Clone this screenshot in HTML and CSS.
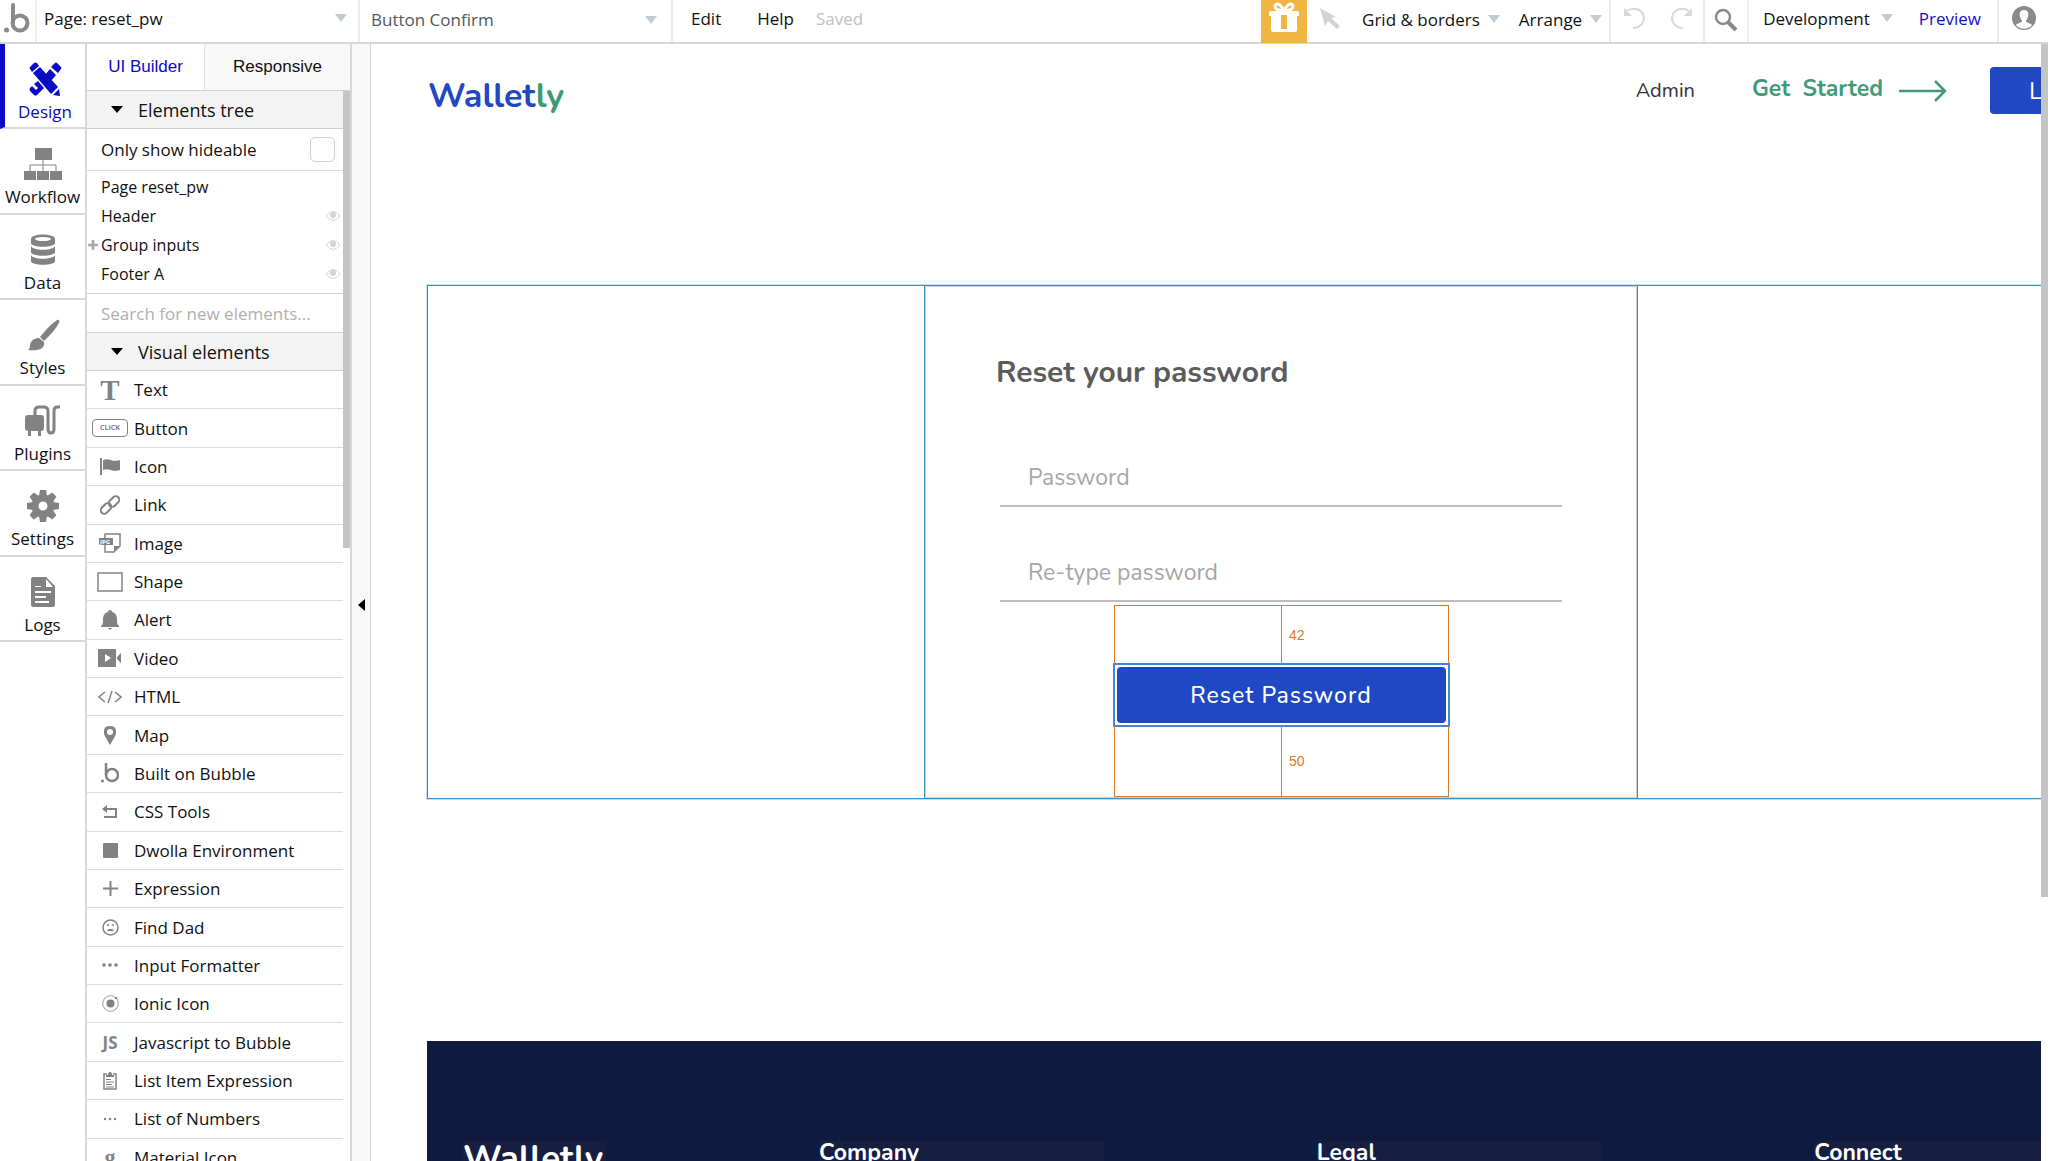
FILE: index.html
```
<!DOCTYPE html>
<html lang="en">
<head>
  <meta charset="UTF-8" />
  <title>reset_pw | Editor</title>
  <meta name="viewport" content="width=device-width, initial-scale=1.0" />
  <link rel="stylesheet" href="styles.css">
</head>
<body>
  <header class="topbar">
    <a class="logo" href="#" aria-label="Home">
      <svg width="28" height="30" viewBox="0 0 28 30"><path d="M9 2v17" fill="none" stroke="#8a8a8a" stroke-width="4" stroke-linecap="round"/><circle cx="16" cy="20" r="7.5" fill="none" stroke="#8a8a8a" stroke-width="4"/><circle cx="2.500" cy="27" r="2.500" fill="#8a8a8a"/></svg>
    </a>
    <label class="picker picker-page">
      <select aria-label="Page"><option>Page: reset_pw</option></select>
      <span class="caret"></span>
    </label>
    <label class="picker picker-element">
      <select aria-label="Element"><option>Button Confirm</option></select>
      <span class="caret"></span>
    </label>
    <nav class="menu">
      <button>Edit</button>
      <button>Help</button>
      <span class="saved">Saved</span>
    </nav>
    <div class="tools">
      <button class="gift" aria-label="Gift">
        <svg width="32" height="30" viewBox="0 0 32 30"><g fill="none" stroke="#fff" stroke-width="3"><path d="M16 9C11 9 7 7 7 4.500S10 1 12 3s4 6 4 6z"/><path d="M16 9c5 0 9-2 9-4.500S22 1 20 3s-4 6-4 6z"/></g><path d="M3 9h10v5H1v-3q0-2 2-2zM19 9h10q2 0 2 2v3H19zM3 14h10v13h6V14h10v14q0 2-2 2H5q-2 0-2-2zM13 9h6v4h-6z" fill="#fff"/></svg>
      </button>
      <button class="pointer" aria-label="Select">
        <svg width="22" height="22" viewBox="0 0 22 22"><path d="M1 1l16 9-5 1 9 8-3 3-9-8-3 5z" fill="#d2d2d2"/></svg>
      </button>
      <button class="drop">Grid &amp; borders <span class="caret"></span></button>
      <button class="drop drop-arrange">Arrange <span class="caret"></span></button>
      <div class="history">
        <button aria-label="Undo"><svg width="24" height="24" viewBox="0 0 24 24"><path d="M4 5c5-4 16-3 17 7 0 6-5 10-11 10" fill="none" stroke="#d8d8d8" stroke-width="2"/><path d="M1 2v8h8z" fill="#d8d8d8"/></svg></button>
        <button aria-label="Redo"><svg width="24" height="24" viewBox="0 0 24 24"><path d="M20 5c-5-4-16-3-17 7 0 6 5 10 11 10" fill="none" stroke="#d8d8d8" stroke-width="2"/><path d="M23 2v8h-8z" fill="#d8d8d8"/></svg></button>
      </div>
      <button class="search" aria-label="Search">
        <svg width="24" height="24" viewBox="0 0 24 24"><circle cx="9" cy="9" r="7" fill="none" stroke="#8a8a8a" stroke-width="2.500"/><path d="M14 14l8 8" stroke="#8a8a8a" stroke-width="4"/></svg>
      </button>
      <button class="drop drop-version">Development <span class="caret"></span></button>
      <a class="preview" href="#">Preview</a>
      <button class="account" aria-label="Account">
        <svg width="26" height="26" viewBox="0 0 26 26"><circle cx="13" cy="13" r="12" fill="#8a8a8a"/><path d="M13 5c4 0 5 3 4 7-.5 2-2 3-2 4 0 2 5 2 6 4-4 5-12 5-16 0 1-2 6-2 6-4 0-1-1.500-2-2-4-1-4 0-7 4-7z" fill="#fff"/></svg>
      </button>
    </div>
  </header>

  <div class="workspace">
    <nav class="rail">
      <a class="active" href="#">
        <svg width="34" height="34" viewBox="0 0 34 34"><g fill="currentColor"><path d="M2 5l4-4q2-1 3 0l2 3-7 6-2-3q-1-1 0-2zM5 11l7-6 18 20-7 7zM31 27l1 7-7-1zM23 5l4-4q1-1 2 0l4 4q1 1 0 2l-3 4-7-6zM22 7l6 6-5 6-6-6zM10 19l6 7-7 7q-1 1-3 0l-4-4q-1-2 0-3l2-2 4 4 2-2-4-4z"/></g></svg>
        <span>Design</span>
      </a>
      <a href="#">
        <svg width="38" height="34" viewBox="0 0 38 34"><g fill="#828282"><path d="M11 1h17v12H11zM0 24h12v9H0zM13 24h12v9H13zM26 24h12v9H26z"/><path d="M19 13v11M6 24v-6h26v6" fill="none" stroke="#828282" stroke-width="1"/></g></svg>
        <span>Workflow</span>
      </a>
      <a href="#">
        <svg width="26" height="34" viewBox="0 0 26 34"><g fill="#828282"><path d="M1 6c0-6 24-6 24 0v4c0 5-24 5-24 0zM1 13c2 5 22 5 24 0v6c0 5-24 5-24 0zM1 22c2 5 22 5 24 0v6c0 5-24 5-24 0z"/></g><ellipse cx="13" cy="6" rx="8" ry="2" fill="#fff"/></svg>
        <span>Data</span>
      </a>
      <a href="#">
        <svg width="34" height="34" viewBox="0 0 34 34"><path d="M31 2c2-1 3 1 2 3-4 7-9 12-15 18l-4-4C19 13 25 6 31 2zM13 20l5 4c1 7-5 9-16 8 3-2 1-4 3-8 2-3 5-4 8-4z" fill="#828282"/></svg>
        <span>Styles</span>
      </a>
      <a href="#">
        <svg width="38" height="34" viewBox="0 0 38 34"><path d="M11 11V7q0-4 4-4h5q4 0 4 4v18q0 4 3 4t3-4V7q0-4 3-4h3" fill="none" stroke="#828282" stroke-width="3"/><path d="M4 11h13q3 0 3 3v10q0 3-3 3v5h-3v-5H7v5H4v-5q-3 0-3-3V14q0-3 3-3z" fill="#828282"/></svg>
        <span>Plugins</span>
      </a>
      <a href="#">
        <svg width="32" height="34" viewBox="-16 -17 32 34"><g fill="#828282"><g id="teeth"><path d="M-4-10l1-6h6l1 6zM-4 10l1 6h6l1-6z"/><path d="M-10-4l-6 1v6l6 1zM10-4l6 1v6l-6 1z"/></g><use href="#teeth" transform="rotate(45)"/></g><circle r="8" fill="none" stroke="#828282" stroke-width="7"/></svg>
        <span>Settings</span>
      </a>
      <a href="#">
        <svg width="24" height="34" viewBox="0 0 24 34"><path d="M2 2h13l9 9v19q0 2-2 2H2q-2 0-2-2V4q0-2 2-2z" fill="#828282"/><path d="M15 4v8h7zM4 11h6v1H4zM4 16h16v2H4zM4 21h11v2H4zM4 26h14v2H4z" fill="#fff"/></svg>
        <span>Logs</span>
      </a>
    </nav>

    <aside class="panel">
      <div class="tabs">
        <button class="tab selected">UI Builder</button>
        <button class="tab">Responsive</button>
      </div>
      <div class="panel-scroll">
        <div class="panel-body">
          <h2 class="group-title"><span class="triangle"></span>Elements tree</h2>
          <label class="hideable">Only show hideable <input type="checkbox"></label>
          <ul class="tree">
            <li>Page reset_pw</li>
            <li>Header <svg class="eye" width="16" height="12" viewBox="0 0 16 12"><path d="M1 6q7-9 14 0-7 9-14 0z" fill="none" stroke="#d4d4d4"/><circle cx="8" cy="5" r="3" fill="#d4d4d4"/></svg></li>
            <li><svg class="plus" width="10" height="10" viewBox="0 0 10 10"><path d="M5 0v10M0 5h10" stroke="#a8a8a8" stroke-width="2.500"/></svg>Group inputs <svg class="eye" width="16" height="12" viewBox="0 0 16 12"><path d="M1 6q7-9 14 0-7 9-14 0z" fill="none" stroke="#d4d4d4"/><circle cx="8" cy="5" r="3" fill="#d4d4d4"/></svg></li>
            <li>Footer A <svg class="eye" width="16" height="12" viewBox="0 0 16 12"><path d="M1 6q7-9 14 0-7 9-14 0z" fill="none" stroke="#d4d4d4"/><circle cx="8" cy="5" r="3" fill="#d4d4d4"/></svg></li>
          </ul>
          <input class="element-search" type="text" placeholder="Search for new elements..." aria-label="Search for new elements">
          <h2 class="group-title"><span class="triangle"></span>Visual elements</h2>
          <ul class="elements">
            <li><span class="icon icon-t">T</span>Text</li>
            <li><span class="icon"><span class="icon-click">CLICK</span></span>Button</li>
            <li><span class="icon"><svg width="20" height="18" viewBox="0 0 20 18"><path d="M1 1v17" stroke="#828282" stroke-width="2"/><path d="M3 3c6-3 9 3 17 0v10c-8 3-11-3-17 0z" fill="#828282"/></svg></span>Icon</li>
            <li><span class="icon"><svg width="20" height="20" viewBox="0 0 20 20"><g fill="none" stroke="#828282" stroke-width="2"><rect x="8" y="3" width="12" height="7" rx="3.500" transform="rotate(-45 14 6.500)"/><rect x="0" y="10" width="12" height="7" rx="3.500" transform="rotate(-45 6 13.500)"/></g></svg></span>Link</li>
            <li><span class="icon"><svg width="22" height="20" viewBox="0 0 22 20"><path d="M6 5V1h15v12l-6 6H6v-7" fill="none" stroke="#828282" stroke-width="1.500"/><path d="M0 5h14v7H0zM15 19v-6h6z" fill="#828282"/><text x="1" y="11" class="jpg">JPG</text></svg></span>Image</li>
            <li><span class="icon"><svg width="26" height="20" viewBox="0 0 26 20"><path d="M1 1h24v18H1z" fill="none" stroke="#828282" stroke-width="1.500"/></svg></span>Shape</li>
            <li><span class="icon"><svg width="18" height="20" viewBox="0 0 18 20"><path d="M9 0q2 0 2 2c4 1 5 4 5 8 0 3 0 4 2 6v1H0v-1c2-2 2-3 2-6 0-4 1-7 5-8q0-2 2-2zM7 18h4q-2 3-4 0z" fill="#828282"/></svg></span>Alert</li>
            <li><span class="icon"><svg width="24" height="18" viewBox="0 0 24 18"><path d="M1 0h16q1 0 1 1v16q0 1-1 1H1q-1 0-1-1V1q0-1 1-1zM19 8l4-4v10l-4-4z" fill="#828282"/><path d="M7 5l6 4-6 4z" fill="#fff"/></svg></span>Video</li>
            <li><span class="icon"><svg width="24" height="14" viewBox="0 0 24 14"><path d="M7 2L1 7l6 5M17 2l6 5-6 5M14 1l-4 12" fill="none" stroke="#828282" stroke-width="1.500"/></svg></span>HTML</li>
            <li><span class="icon"><svg width="12" height="19" viewBox="0 0 12 19"><path d="M6 0c8 0 7 8 4 12l-4 7-4-7C-1 8-2 0 6 0zm0 3a3 3 0 1 0 0 6 3 3 0 0 0 0-6z" fill="#828282"/></svg></span>Map</li>
            <li><span class="icon"><svg width="18" height="20" viewBox="0 0 18 20"><path d="M5 0v12" stroke="#828282" stroke-width="2.500"/><circle cx="11" cy="12" r="6" fill="none" stroke="#828282" stroke-width="2.500"/><circle cx="1.500" cy="18" r="1.500" fill="#828282"/></svg></span>Built on Bubble</li>
            <li><span class="icon"><svg width="16" height="14" viewBox="0 0 16 14"><path d="M4 4h10v8H2" fill="none" stroke="#828282" stroke-width="2"/><path d="M0 4l5-4v8z" fill="#828282"/></svg></span>CSS Tools</li>
            <li><span class="icon"><svg width="15" height="15" viewBox="0 0 15 15"><rect width="15" height="15" rx="1" fill="#828282"/></svg></span>Dwolla Environment</li>
            <li><span class="icon"><svg width="15" height="15" viewBox="0 0 15 15"><path d="M7.500 0v15M0 7.500h15" stroke="#828282" stroke-width="2"/></svg></span>Expression</li>
            <li><span class="icon"><svg width="17" height="17" viewBox="0 0 17 17"><circle cx="8.500" cy="8.500" r="7.500" fill="none" stroke="#828282" stroke-width="1.500"/><circle cx="6" cy="6" r="1" fill="#828282"/><circle cx="11" cy="6" r="1" fill="#828282"/><path d="M5 12c1-3 6-3 7 0z" fill="#828282"/></svg></span>Find Dad</li>
            <li><span class="icon"><svg width="16" height="4" viewBox="0 0 16 4"><g fill="#828282"><circle cx="2" cy="2" r="1.800"/><circle cx="8" cy="2" r="1.800"/><circle cx="14" cy="2" r="1.800"/></g></svg></span>Input Formatter</li>
            <li><span class="icon"><svg width="17" height="17" viewBox="0 0 17 17"><circle cx="8.500" cy="8.500" r="7.800" fill="none" stroke="#9a9a9a"/><circle cx="8.500" cy="8.500" r="4" fill="#828282"/><circle cx="14" cy="3" r="1.200" fill="#828282"/></svg></span>Ionic Icon</li>
            <li><span class="icon icon-js">JS</span>Javascript to Bubble</li>
            <li><span class="icon"><svg width="14" height="18" viewBox="0 0 14 18"><path d="M4 2H1v15h12V2h-3" fill="none" stroke="#828282" stroke-width="1.500"/><path d="M3 5V3h2q0-3 2-3t2 3h2v2z" fill="#828282"/><path d="M3 7.500h5M3 10h8M3 12.500h6M3 15h8" stroke="#828282"/></svg></span>List Item Expression</li>
            <li><span class="icon"><svg width="14" height="4" viewBox="0 0 14 4"><g fill="#828282"><circle cx="2" cy="2" r="1.200"/><circle cx="7" cy="2" r="1.200"/><circle cx="12" cy="2" r="1.200"/></g></svg></span>List of Numbers</li>
            <li><span class="icon icon-g">g</span>Material Icon</li>
          </ul>
        </div>
        <div class="panel-bar"><div class="panel-thumb"></div></div>
      </div>
    </aside>

    <button class="collapse" aria-label="Collapse panel"><span></span></button>

    <main class="canvas">
      <div class="page">
        <header class="site-header">
          <a class="brand" href="#">Wallet<span>ly</span></a>
          <nav class="site-nav">
            <a class="admin" href="#">Admin</a>
            <a class="start" href="#"><span>Get&nbsp; Started</span>
              <svg width="48" height="22" viewBox="0 0 48 22"><path d="M0 11h46M36 1l10 10-10 10" fill="none" stroke="#3f9a77" stroke-width="2.500"/></svg>
            </a>
            <button class="login">Login</button>
          </nav>
        </header>

        <section class="group-inputs">
          <form class="reset-form">
            <h1>Reset your password</h1>
            <input type="password" placeholder="Password" aria-label="Password">
            <input type="password" placeholder="Re-type password" aria-label="Re-type password">
            <div class="confirm">
              <button type="button">Reset Password</button>
              <div class="selection"></div>
              <div class="distance above"><span>42</span></div>
              <div class="distance below"><span>50</span></div>
            </div>
          </form>
        </section>

        <footer class="site-footer">
          <div class="footer-brand">Walletly</div>
          <h3>Company</h3>
          <h3>Legal</h3>
          <h3>Connect</h3>
        </footer>
      </div>
    </main>
    <div class="page-bar"><div class="page-thumb"></div></div>
  </div>
</body>
</html>
```
FILE: styles.css
```
* {
  box-sizing: border-box;
}
body {
  margin: 0;
  height: 100vh;
  display: flex;
  flex-direction: column;
  overflow: hidden;
  background: #fff;
  color: #111;
  font-family: "Open Sans", "Noto Sans", sans-serif;
  font-size: 17px;
}
button, select, input {
  font: inherit;
  color: inherit;
  background: none;
  border: 0;
  padding: 0;
  margin: 0;
}
a {
  color: inherit;
  text-decoration: none;
}
ul {
  list-style: none;
  margin: 0;
  padding: 0;
}

/* top bar */
.topbar {
  flex: none;
  display: flex;
  height: 44px;
  border-bottom: 2px solid #d6d8d8;
}
.topbar button, .preview, .saved {
  display: flex;
  align-items: center;
  padding-bottom: 6px;
}
.logo {
  display: flex;
  align-items: center;
  width: 37px;
  padding: 0 0 6px 4px;
  border-right: 2px solid #eceeee;
}
.caret {
  border: 6px solid transparent;
  border-top: 8px solid #c3cbd2;
  border-bottom: 0;
}
.picker {
  display: flex;
  align-items: center;
  padding: 0 11px 6px 7px;
  border-right: 2px solid #eceeee;
}
.picker select {
  flex: 1;
  appearance: none;
}
.picker-page {
  width: 323px;
}
.picker-element {
  width: 313px;
  padding: 0 14px 3px 11px;
  color: #50585c;
}
.menu {
  display: flex;
  gap: 36px;
  padding-left: 18px;
}
.menu .saved {
  color: #c0c0c0;
  margin-left: -14px;
}
.tools {
  display: flex;
  margin-left: auto;
}
.topbar .gift {
  width: 46px;
  height: 43px;
  justify-content: center;
  padding-bottom: 10px;
  background: #f0b643;
}
.topbar .pointer {
  margin: 0 21px 0 12px;
}
.topbar .drop {
  gap: 8px;
  margin-right: 19px;
  padding-bottom: 4px;
}
.topbar .drop-arrange {
  margin-right: 7px;
}
.history {
  display: flex;
  gap: 22px;
  padding: 0 10px 0 12px;
  border-left: 2px solid #eceeee;
  border-right: 2px solid #eceeee;
}
.topbar .search {
  width: 44px;
  justify-content: center;
  padding-bottom: 2px;
  border-right: 2px solid #eceeee;
}
.topbar .drop-version {
  margin: 0 26px 0 14px;
  gap: 11px;
  padding-bottom: 6px;
}
.preview {
  color: #1212c8;
  padding-right: 16px;
  border-right: 2px solid #eceeee;
}
.account {
  width: 49px;
  justify-content: center;
}

.workspace {
  flex: 1;
  min-height: 0;
  display: flex;
}

/* left rail */
.rail {
  display: grid;
  grid-auto-rows: 1fr;
  width: 85px;
  height: 598px;
  flex: none;
}
.rail a {
  display: flex;
  flex-direction: column;
  align-items: center;
  gap: 4px;
  padding-top: 18px;
  border-bottom: 2px solid #d8d8d8;
}
.rail svg {
  flex: none;
}
.rail .active {
  color: #0a0ac8;
  border-left: 5px solid #0a0ac8;
}

/* elements panel */
.panel {
  flex: none;
  display: flex;
  flex-direction: column;
  width: 267px;
  border-left: 2px solid #d8d8d8;
  border-right: 2px solid #d8d8d8;
}
.tabs {
  flex: none;
  display: grid;
  grid-template-columns: 118px 1fr;
  height: 47px;
  border-bottom: 1px solid #d0d0d0;
  font-family: "Liberation Sans", Arial, sans-serif;
}
.tab {
  background: #f8f8f8;
}
.tab.selected {
  color: #0a0ac8;
  background: #fff;
  border-right: 1px solid #e4e4e4;
}
.panel-scroll {
  flex: 1;
  min-height: 0;
  display: flex;
}
.panel-body {
  flex: 1;
  overflow: hidden;
}
.panel-bar {
  width: 7px;
}
.panel-thumb {
  height: 457px;
  background: #c4c4c4;
}
.group-title {
  display: flex;
  align-items: center;
  height: 38px;
  margin: 0;
  padding-left: 24px;
  font-size: 18px;
  font-weight: 400;
  background: #f3f3f3;
  border-bottom: 1px solid #d0d0d0;
}
.triangle {
  margin-right: 15px;
  border: 6px solid transparent;
  border-top: 7px solid #000;
  border-bottom: 0;
}
.hideable {
  display: flex;
  align-items: center;
  justify-content: space-between;
  height: 42px;
  padding: 0 8px 0 14px;
  border-bottom: 1px solid #dcdcdc;
}
.hideable input {
  appearance: none;
  width: 25px;
  height: 25px;
  border: 1px solid #d0d0d0;
  border-radius: 5px;
}
.tree {
  padding: 1px 2px 5px 14px;
  font-size: 16px;
  border-bottom: 1px solid #d0d0d0;
}
.tree li {
  position: relative;
  display: flex;
  align-items: center;
  height: 29px;
}
.eye {
  margin-left: auto;
}
.plus {
  position: absolute;
  left: -13px;
}
.element-search {
  display: block;
  width: 100%;
  height: 39px;
  padding: 0 14px;
  border-bottom: 1px solid #d0d0d0;
}
.element-search::placeholder {
  color: #b0b0b0;
  opacity: 1;
}
.elements {
  display: grid;
  grid-auto-rows: 1fr;
  height: 806px;
}
.elements li {
  display: flex;
  align-items: center;
  gap: 6px;
  padding-left: 5px;
  border-bottom: 1px solid #dcdcdc;
}
.icon {
  display: flex;
  justify-content: center;
  width: 36px;
  color: #828282;
}
.icon-t {
  font: 700 29px/30px "Liberation Serif", serif;
}
.icon-js {
  font-weight: 700;
}
.icon-g {
  font: 700 22px/24px "Liberation Serif", serif;
}
.icon-click {
  width: 36px;
  border: 1px solid #828282;
  border-radius: 4px;
  font: 700 7px/16px "Open Sans", sans-serif;
  text-align: center;
}
.jpg {
  font: 700 6px "Open Sans", sans-serif;
  fill: #fff;
}

.collapse {
  flex: none;
  display: flex;
  align-items: center;
  justify-content: center;
  width: 19px;
  padding-top: 4px;
  background: #f8f8f8;
  border-right: 1px solid #d4d4d4;
}
.collapse span {
  border: 6px solid transparent;
  border-right: 7px solid #000;
  border-left: 0;
}

/* edited page */
.canvas {
  flex: 1;
  min-width: 0;
  overflow: hidden;
  font-family: Nunito, Lato, sans-serif;
}
.page {
  margin: 0 -94px 0 56px;
}
.page-bar {
  flex: none;
  width: 7px;
}
.page-thumb {
  height: 853px;
  background: #c4c4c4;
}
.site-header {
  display: flex;
  align-items: center;
  justify-content: space-between;
  height: 93px;
}
.brand {
  padding: 10px 0 0 1px;
  font-size: 34px;
  font-weight: 700;
  color: #2048c4;
}
.brand span {
  color: #3f9a77;
}
.site-nav {
  display: flex;
  align-items: center;
}
.admin {
  margin-right: 57px;
  font-size: 20px;
  color: #333;
}
.start {
  display: flex;
  align-items: center;
  gap: 16px;
  margin-right: 43px;
  font-size: 23px;
  font-weight: 700;
  color: #3f9a77;
}
.start span {
  padding-bottom: 4px;
}
.login {
  width: 145px;
  height: 47px;
  padding-left: 39px;
  font-size: 24px;
  text-align: left;
  color: #fff;
  background: #2048c4;
  border-radius: 4px;
}
.group-inputs {
  margin-top: 148px;
  border: 1px solid #3490c6;
  box-shadow: 0 0 0 1px #c8e0ee;
}
.reset-form {
  width: 714px;
  margin: 0 auto;
  padding: 67px 71px 75px;
  border: 1px solid #3490c6;
  border-width: 0 1px;
  box-shadow: inset 0 0 0 1px #c8d4da;
}
.reset-form h1 {
  margin: 0;
  font-size: 30px;
  line-height: 40px;
  font-weight: 700;
  color: #5c5c5c;
}
.reset-form input {
  display: block;
  width: 562px;
  max-width: 100%;
  height: 60px;
  margin: 54px 4px 0;
  padding: 3px 0 0 28px;
  font-size: 23px;
  border-bottom: 2px solid #bdbdbd;
}
.reset-form input + input {
  margin-top: 35px;
}
.reset-form input::placeholder {
  color: #a6a6a6;
  opacity: 1;
}
.confirm {
  position: relative;
  width: 329px;
  margin: 65px auto 0;
}
.confirm button {
  display: block;
  width: 100%;
  height: 56px;
  font-size: 23px;
  font-weight: 500;
  letter-spacing: 1px;
  color: #fff;
  background: #2048c4;
  border-radius: 4px;
}
.selection {
  position: absolute;
  inset: -4px;
  border: 2px solid #3f86dc;
}

/* distance guides around the selected button */
.distance {
  position: absolute;
  left: -3px;
  right: -3px;
  display: flex;
  align-items: center;
  border: 1px solid #d9792c;
  background: linear-gradient(#d9792c, #d9792c) center / 1px 100% no-repeat;
  font: 14px "Liberation Sans", Arial, sans-serif;
  color: #d9792c;
}
.distance span {
  margin-left: calc(50% + 8px);
}
.above {
  bottom: calc(100% + 3px);
  height: 59px;
  border-bottom: 0;
}
.below {
  top: calc(100% + 3px);
  height: 71px;
  border-top: 0;
}

.site-footer {
  display: grid;
  grid-template-columns: 143px 1fr 1fr 1fr;
  column-gap: 213px;
  height: 400px;
  margin-top: 242px;
  padding: 100px 36px 0;
  align-items: start;
  color: #fff;
  background: #0e1a3e;
}
.footer-brand, .site-footer h3 {
  margin: 0;
  height: 60px;
  font-weight: 700;
  background: #161f42;
}
.footer-brand {
  font-size: 35px;
  line-height: 36px;
}
.site-footer h3 {
  font-size: 23px;
  line-height: 24px;
}
```
